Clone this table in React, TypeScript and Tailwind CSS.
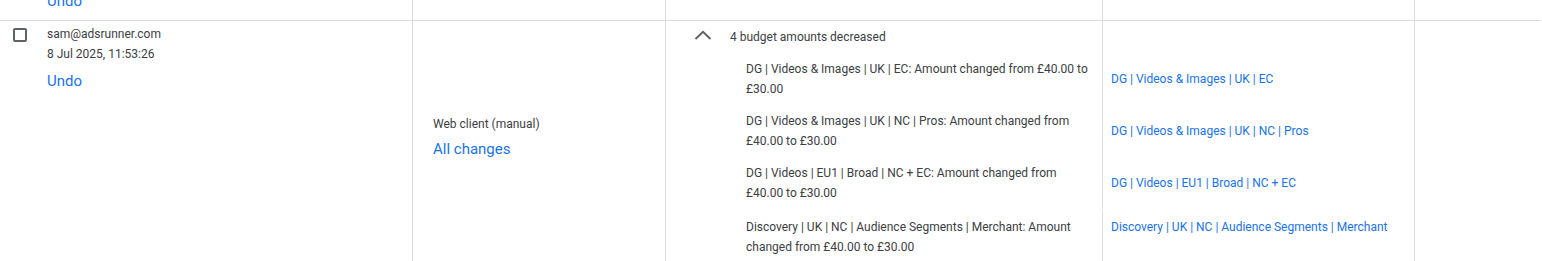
const items = [
  {
    text: "DG | Videos & Images | UK | EC: Amount changed from £40.00 to £30.00",
    link: "DG | Videos & Images | UK | EC",
  },
  {
    text: "DG | Videos & Images | UK | NC | Pros: Amount changed from £40.00 to £30.00",
    link: "DG | Videos & Images | UK | NC | Pros",
  },
  {
    text: "DG | Videos | EU1 | Broad | NC + EC: Amount changed from £40.00 to £30.00",
    link: "DG | Videos | EU1 | Broad | NC + EC",
  },
];

const ChevronUp = () => (
  <svg width="18" height="10" viewBox="0 0 18 10" className="block">
    <polyline
      points="1.5,9 9,1.8 16.5,9"
      fill="none"
      stroke="#5f6368"
      strokeWidth="2"
    />
  </svg>
);

const App = () => {
  return (
    <div className="w-[1542px] h-[261px] overflow-hidden bg-white text-[#3c4043] font-['Roboto',sans-serif] text-[12px] leading-[20px]">
      {/* previous row, cut off at top */}
      <div className="flex h-[20px] overflow-hidden">
        <div className="w-[413px] border-r border-[#dadce0] flex flex-col justify-end pb-[9px] pl-[47px]">
          <span className="text-[15px] text-[#1a73e8]">Undo</span>
        </div>
        <div className="w-[253px] border-r border-[#dadce0]" />
        <div className="w-[437px] border-r border-[#dadce0]" />
        <div className="w-[312px] border-r border-[#dadce0]" />
        <div className="flex-1" />
      </div>

      {/* current row */}
      <div className="flex h-[241px] border-t border-[#dadce0] mr-[1px]">
        <div className="w-[413px] border-r border-[#dadce0] flex pl-[13px] pt-[7px]">
          <div className="w-[14px] h-[14px] border-2 border-[#5f6368] rounded-[2px]" />
          <div className="ml-[20px] -mt-[4px]">
            <div>sam@adsrunner.com</div>
            <div>8 Jul 2025, 11:53:26</div>
            <div className="mt-[7px] text-[15px] text-[#1a73e8]">Undo</div>
          </div>
        </div>

        <div className="w-[253px] border-r border-[#dadce0] pl-[20px] pt-[93px]">
          <div>Web client (manual)</div>
          <div className="mt-[5px] text-[15px] text-[#1a73e8]">All changes</div>
        </div>

        <div className="w-[749px] flex flex-col">
          <div className="flex h-[38px]">
            <div className="w-[437px] border-r border-[#dadce0] flex items-start pt-[6px] pl-[28px]">
              <div className="mt-[3px]">
                <ChevronUp />
              </div>
              <span className="ml-[18px]">4 budget amounts decreased</span>
            </div>
            <div className="w-[312px] border-r border-[#dadce0]" />
          </div>

          {items.map((it, i) => (
            <div key={i} className={`flex ${i === 2 ? "h-[46px]" : "h-[52px]"}`}>
              <div className="w-[437px] border-r border-[#dadce0] pl-[80px] pr-[10px]">
                {it.text}
              </div>
              <div className="w-[312px] border-r border-[#dadce0]">
                <div className="h-[40px] flex items-center pl-[8px] text-[#1a73e8]">
                  {it.link}
                </div>
              </div>
            </div>
          ))}

          <div className="flex h-[2px]">
            <div className="w-[437px]" />
            <div className="w-[312px] border-r border-[#dadce0]" />
          </div>

          <div className="flex flex-1">
            <div className="w-[437px] border-r border-[#dadce0] pt-[6px] pl-[80px] pr-[10px]">
              Discovery | UK | NC | Audience Segments | Merchant: Amount changed from £40.00 to £30.00
            </div>
            <div className="w-[312px] border-r border-[#dadce0] pt-[6px] pl-[8px] text-[#1a73e8]">
              Discovery | UK | NC | Audience Segments | Merchant
            </div>
          </div>
        </div>

        <div className="flex-1" />
      </div>
    </div>
  );
};

export default App;
